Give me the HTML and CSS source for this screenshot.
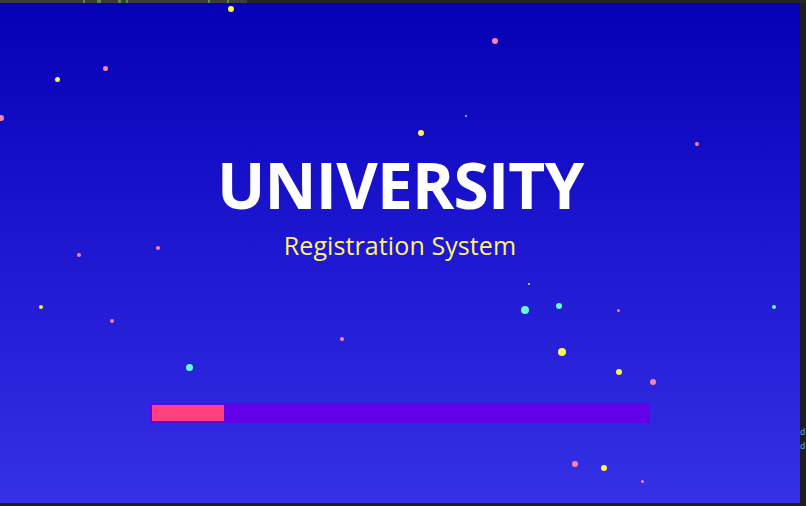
FILE: index.html
```html
<!DOCTYPE html>
<html>
<head>
<meta charset="utf-8">
<title>University Registration System</title>
<link rel="stylesheet" href="styles.css">
</head>
<body>
<div class="topbar">
  <div class="tab"><i class="frag f1"></i><i class="frag f2"></i><i class="frag f3"></i><i class="frag f4"></i></div>
  <div class="rest"><i class="frag f5"></i><i class="frag f6"></i></div>
</div>
<div class="row">
  <main class="app">
    <div class="stars">
      <span class="star y" style="left:228px;top:3px;width:6px;height:6px"></span>
      <span class="star p" style="left:492px;top:35px;width:6px;height:6px"></span>
      <span class="star p" style="left:103px;top:63px;width:5px;height:5px"></span>
      <span class="star y" style="left:55px;top:74px;width:5px;height:5px"></span>
      <span class="star p" style="left:-2px;top:112px;width:6px;height:6px"></span>
      <span class="star c" style="left:465px;top:112px;width:2px;height:2px"></span>
      <span class="star y" style="left:418px;top:127px;width:6px;height:6px"></span>
      <span class="star p" style="left:695px;top:139px;width:4px;height:4px"></span>
      <span class="star p" style="left:156px;top:243px;width:4px;height:4px"></span>
      <span class="star p" style="left:77px;top:250px;width:4px;height:4px"></span>
      <span class="star y" style="left:528px;top:280px;width:2px;height:2px"></span>
      <span class="star y" style="left:39px;top:302px;width:4px;height:4px"></span>
      <span class="star c" style="left:521px;top:303px;width:8px;height:8px"></span>
      <span class="star c" style="left:556px;top:300px;width:6px;height:6px"></span>
      <span class="star p" style="left:617px;top:306px;width:3px;height:3px"></span>
      <span class="star c" style="left:772px;top:302px;width:4px;height:4px"></span>
      <span class="star p" style="left:110px;top:316px;width:4px;height:4px"></span>
      <span class="star p" style="left:340px;top:334px;width:4px;height:4px"></span>
      <span class="star y" style="left:558px;top:345px;width:8px;height:8px"></span>
      <span class="star c" style="left:186px;top:361px;width:7px;height:7px"></span>
      <span class="star y" style="left:616px;top:366px;width:6px;height:6px"></span>
      <span class="star p" style="left:650px;top:376px;width:6px;height:6px"></span>
      <span class="star p" style="left:572px;top:458px;width:6px;height:6px"></span>
      <span class="star y" style="left:601px;top:462px;width:6px;height:6px"></span>
      <span class="star p" style="left:641px;top:477px;width:3px;height:3px"></span>
    </div>
    <h1 class="title">UNIVERSITY</h1>
    <p class="subtitle">Registration System</p>
    <div class="progress"><div class="progress-fill" style="width:72px"></div></div>
  </main>
  <aside class="side">
    <span class="peek">d</span>
    <span class="peek">d</span>
  </aside>
</div>
<div class="bottombar"></div>
</body>
</html>
```
FILE: styles.css
```css
html, body {
  margin: 0;
  padding: 0;
}
body {
  width: 806px;
  height: 506px;
  overflow: hidden;
  background: #1e1e1e;
  font-family: "Open Sans", "Noto Sans", sans-serif;
}
.topbar {
  display: flex;
  height: 3px;
}
.topbar .tab {
  width: 247px;
  background: #3c3c3c;
  position: relative;
}
.topbar .rest {
  flex: 1;
  background: #252526;
  position: relative;
}
.frag {
  position: absolute;
  top: 0;
  height: 3px;
  background: #5a8a4a;
}
.f1 { left: 83px; width: 2px; }
.f2 { left: 97px; width: 4px; }
.f3 { left: 118px; width: 3px; }
.f4 { left: 126px; width: 2px; }
.f5 { left: -39px; width: 2px; }
.f6 { left: -20px; width: 2px; }
.row {
  display: flex;
  height: 500px;
}
.app {
  position: relative;
  width: 800px;
  height: 500px;
  overflow: hidden;
  background: linear-gradient(to bottom, #0500b5 0%, #1e18d2 50%, #3531e5 100%);
  display: flex;
  flex-direction: column;
  align-items: center;
}
.stars {
  position: absolute;
  inset: 0;
}
.star {
  position: absolute;
  border-radius: 50%;
}
.star.y { background: #fff350; }
.star.p { background: #ff80ab; }
.star.c { background: #64ffda; }
.title {
  position: relative;
  margin: 150px 0 0;
  font-size: 64px;
  line-height: 64px;
  font-weight: 700;
  letter-spacing: -0.8px;
  text-indent: 0.8px;
  color: #ffffff;
}
.subtitle {
  position: relative;
  margin: 16px 0 0;
  font-size: 25px;
  line-height: 24px;
  font-weight: 400;
  letter-spacing: 0.1px;
  color: #fff36b;
}
.progress {
  position: relative;
  margin-top: 146px;
  width: 500px;
  height: 20px;
  padding: 2px;
  box-sizing: border-box;
  background: #6200ea;
}
.progress-fill {
  height: 16px;
  background: #ff4081;
}
.side {
  width: 6px;
  height: 500px;
  overflow: hidden;
  display: flex;
  flex-direction: column;
  padding-top: 423px;
  box-sizing: border-box;
}
.peek {
  display: block;
  font-family: "Liberation Mono", monospace;
  font-size: 9px;
  line-height: 14px;
  color: #3fb6e8;
  white-space: nowrap;
}
.bottombar {
  height: 3px;
}
```
